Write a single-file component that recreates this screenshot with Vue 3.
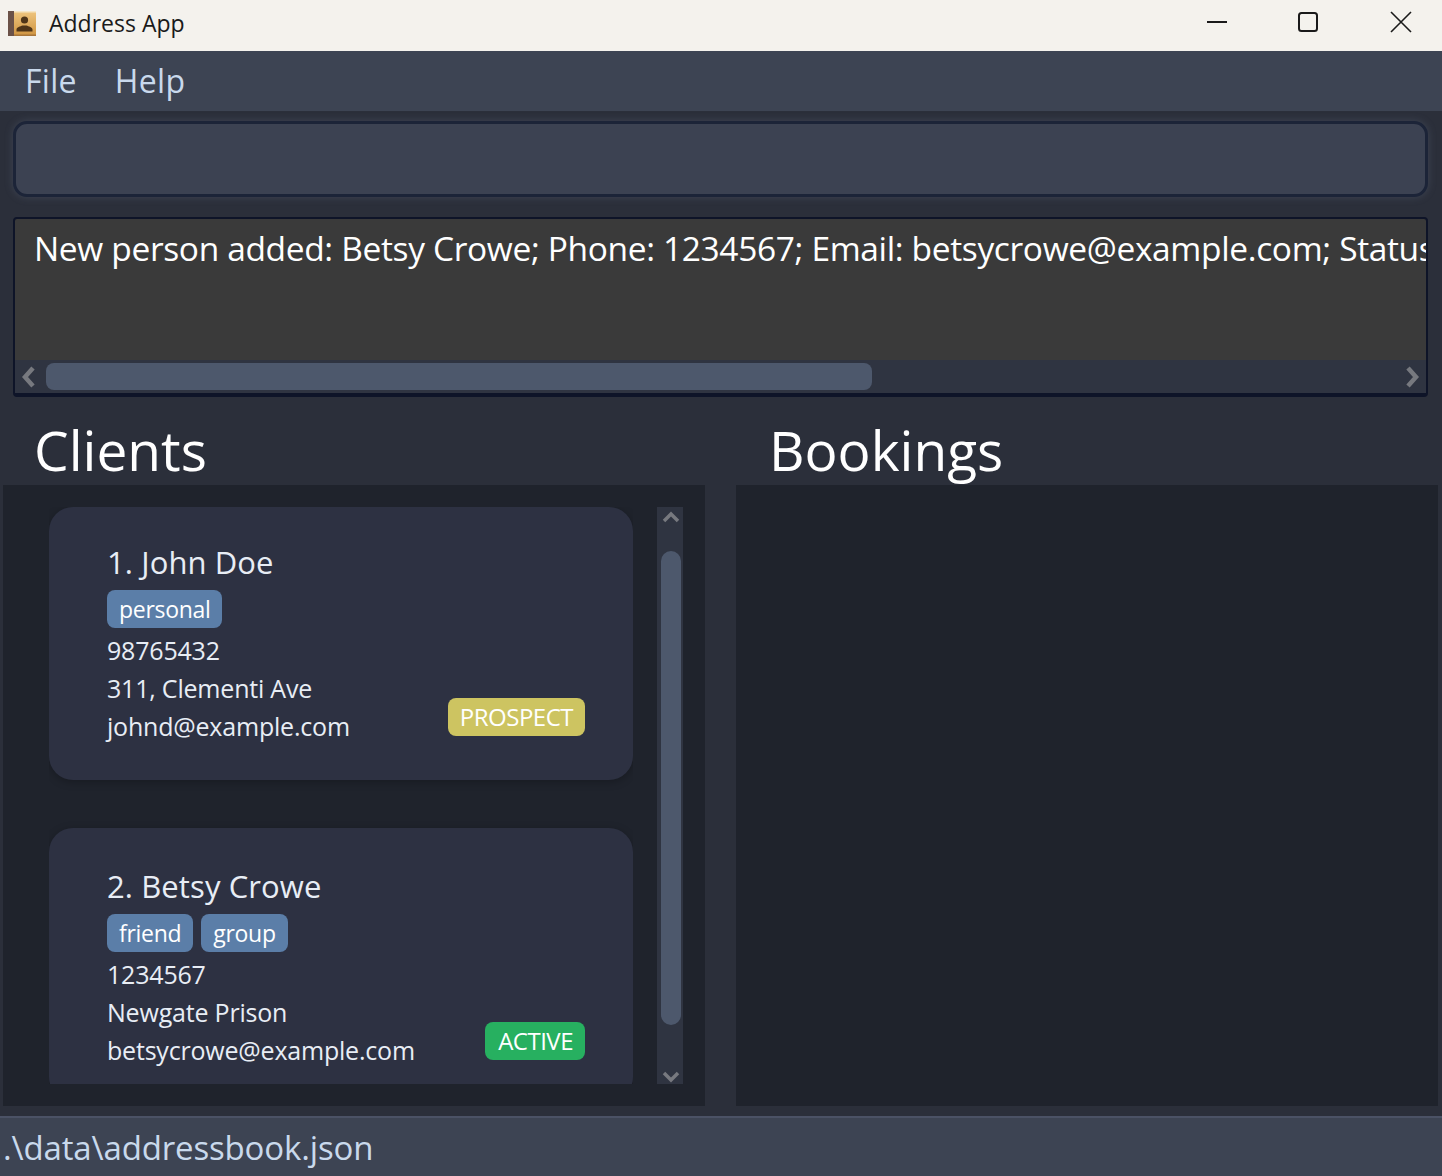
<template>
  <div class="app">
    <div class="titlebar">
      <svg class="appicon" width="30" height="28" viewBox="0 0 30 28">
        <defs>
          <linearGradient id="bookfill" x1="0" y1="0" x2="0" y2="1">
            <stop offset="0" stop-color="#efc67f" />
            <stop offset="1" stop-color="#cf9440" />
          </linearGradient>
        </defs>
        <rect x="1" y="1" width="28" height="25" rx="1" fill="url(#bookfill)" />
        <rect x="1" y="1" width="28" height="1.500" fill="#f6e6c4" />
        <rect x="1" y="1" width="6" height="25" fill="#6b5248" />
        <rect x="7" y="24.500" width="22" height="1.500" fill="#a8763a" />
        <circle cx="17.500" cy="10" r="3.600" fill="#4f3518" />
        <path d="M9.500 21.500v-2c0-2.500 4-3 6-4h4c2 1 6 1.500 6 4v2z" fill="#4f3518" />
      </svg>
      <span class="apptitle">Address App</span>
      <div class="winbtns">
        <svg class="minbtn" width="22" height="22" viewBox="0 0 22 22"><path d="M1 11h20" stroke="#1a1a1a" stroke-width="2" /></svg>
        <svg width="22" height="22" viewBox="0 0 22 22"><rect x="2" y="2" width="18" height="18" rx="2.500" fill="none" stroke="#1a1a1a" stroke-width="2" /></svg>
        <svg width="22" height="22" viewBox="0 0 22 22"><path d="M1 1l20 20M21 1L1 21" stroke="#1a1a1a" stroke-width="1.600" /></svg>
      </div>
    </div>

    <div class="menubar">
      <span v-for="m in menus" :key="m" class="menuitem">{{ m }}</span>
    </div>

    <div class="content">
      <div class="commandbox"></div>

      <div class="resultbox">
        <div class="resulttext">{{ resultMessage }}</div>
        <div class="hscroll">
          <svg class="arrow" width="16" height="26" viewBox="0 0 16 26"><path d="M13 4L5 13l8 9" fill="none" stroke="#77797f" stroke-width="4.500" /></svg>
          <div class="hthumbtrack"><div class="hthumb"></div></div>
          <svg class="arrow" width="16" height="26" viewBox="0 0 16 26"><path d="M3 4l8 9-8 9" fill="none" stroke="#77797f" stroke-width="4.500" /></svg>
        </div>
      </div>

      <div class="columns">
        <div class="column">
          <h2 class="heading">Clients</h2>
          <div class="panel clientpanel">
            <div class="cardlist">
              <div v-for="(c, i) in clients" :key="c.name" class="card">
                <div class="cardname">{{ i + 1 }}. {{ c.name }}</div>
                <div class="tags">
                  <span v-for="t in c.tags" :key="t" class="tag">{{ t }}</span>
                </div>
                <div class="cardline">{{ c.phone }}</div>
                <div class="cardline">{{ c.address }}</div>
                <div class="lastrow">
                  <span class="cardline">{{ c.email }}</span>
                  <span class="status" :class="c.statusClass">{{ c.status }}</span>
                </div>
              </div>
            </div>
            <div class="vscroll">
              <svg width="18" height="12" viewBox="0 0 18 12"><path d="M2 10l7-7 7 7" fill="none" stroke="#77797f" stroke-width="3.500" /></svg>
              <div class="vthumb"></div>
              <svg class="downarrow" width="18" height="12" viewBox="0 0 18 12"><path d="M2 2l7 7 7-7" fill="none" stroke="#77797f" stroke-width="3.500" /></svg>
            </div>
          </div>
        </div>
        <div class="column">
          <h2 class="heading bookings">Bookings</h2>
          <div class="panel"></div>
        </div>
      </div>
    </div>

    <div class="statusbar">.\data\addressbook.json</div>
  </div>
</template>

<script setup>
const menus = ["File", "Help"];

const resultMessage =
  "New person added: Betsy Crowe; Phone: 1234567; Email: betsycrowe@example.com; Status: ACTIVE; Tags: [friend][group]";

const clients = [
  {
    name: "John Doe",
    tags: ["personal"],
    phone: "98765432",
    address: "311, Clementi Ave",
    email: "johnd@example.com",
    status: "PROSPECT",
    statusClass: "prospect",
  },
  {
    name: "Betsy Crowe",
    tags: ["friend", "group"],
    phone: "1234567",
    address: "Newgate Prison",
    email: "betsycrowe@example.com",
    status: "ACTIVE",
    statusClass: "active",
  },
];
</script>

<style>
html,
body {
  margin: 0;
  background: #2b2f3a;
}
</style>

<style scoped>
.app {
  width: 1442px;
  height: 1176px;
  display: flex;
  flex-direction: column;
  overflow: hidden;
  background: #2b2f3a;
  font-family: "Open Sans", "Noto Sans", sans-serif;
  color: #fff;
}
.titlebar {
  height: 51px;
  flex: none;
  display: flex;
  align-items: center;
  background: #f4f2ed;
  color: #1a1a1a;
  padding-left: 7px;
  box-sizing: border-box;
}
.appicon {
  margin-bottom: 3px;
}
.apptitle {
  margin-left: 12px;
  font-size: 23px;
  margin-bottom: 5px;
}
.winbtns {
  margin-left: auto;
  display: flex;
  gap: 71px;
  padding-right: 30px;
  margin-bottom: 7px;
}
.minbtn {
  margin-right: -2px;
}
.menubar {
  height: 60px;
  flex: none;
  display: flex;
  align-items: center;
  gap: 38px;
  padding: 0 0 2px 25px;
  background: #3d4453;
  box-sizing: border-box;
}
.menuitem {
  font-size: 32px;
  color: #c9d9ec;
  letter-spacing: 0.3px;
}
.content {
  flex: 1;
  min-height: 0;
  display: flex;
  flex-direction: column;
  padding: 10px 4px 10px 3px;
  box-sizing: border-box;
}
.commandbox {
  height: 76px;
  flex: none;
  margin: 0 10px;
  background: #3c4252;
  border: 3px solid #1c2438;
  border-radius: 14px;
  box-sizing: border-box;
  box-shadow: 0 0 9px rgba(110, 120, 145, 0.3);
}
.resultbox {
  height: 180px;
  flex: none;
  margin: 20px 10px 0;
  display: flex;
  flex-direction: column;
  background: #3a3a3a;
  border: 2px solid #0e1428;
  border-bottom-width: 4px;
  border-radius: 4px;
  box-sizing: border-box;
  overflow: hidden;
}
.resulttext {
  flex: 1;
  min-height: 0;
  padding: 6px 0 0 19px;
  font-size: 33.500px;
  letter-spacing: -0.35px;
  white-space: nowrap;
  overflow: hidden;
}
.hscroll {
  height: 33px;
  flex: none;
  display: flex;
  align-items: center;
  background: #2f3441;
}
.arrow {
  flex: none;
  margin: 0 5px;
}
.hthumbtrack {
  flex: 1;
  margin: 0 0 0 5px;
}
.hthumb {
  width: 826px;
  height: 27px;
  border-radius: 8px;
  background: #4d586c;
}
.columns {
  flex: 1;
  min-height: 0;
  display: flex;
  gap: 31px;
}
.column {
  width: 702px;
  display: flex;
  flex-direction: column;
}
.heading {
  margin: 0;
  height: 88px;
  flex: none;
  padding: 14px 0 0 31px;
  box-sizing: border-box;
  font-size: 55px;
  font-weight: 400;
  line-height: 78px;
}
.bookings {
  padding-left: 33px;
}
.panel {
  flex: 1;
  min-height: 0;
  background: #1f232c;
}
.clientpanel {
  display: flex;
  padding: 22px 22px 22px 46px;
  box-sizing: border-box;
  gap: 24px;
}
.cardlist {
  flex: 1;
  min-width: 0;
  overflow: hidden;
  display: flex;
  flex-direction: column;
  gap: 48px;
}
.card {
  flex: none;
  height: 273px;
  padding: 35px 48px 0 58px;
  box-sizing: border-box;
  background: #2d3142;
  border-radius: 24px;
  box-shadow: 0 2px 8px rgba(0, 0, 0, 0.25);
}
.card + .card {
  padding-top: 38px;
}
.cardname {
  font-size: 31px;
  line-height: 40px;
  letter-spacing: 0.1px;
  color: #e8edf5;
}
.tags {
  display: flex;
  gap: 8px;
  margin-top: 8px;
}
.tag {
  height: 38px;
  line-height: 38px;
  padding: 0 12px;
  border-radius: 8px;
  background: #5b7ea8;
  font-size: 23px;
  letter-spacing: -0.3px;
}
.cardline {
  height: 38px;
  line-height: 38px;
  font-size: 25px;
  letter-spacing: -0.2px;
  color: #e8edf5;
}
.tags + .cardline {
  margin-top: 3px;
}
.lastrow {
  display: flex;
  justify-content: space-between;
  align-items: center;
}
.status {
  height: 38px;
  line-height: 38px;
  padding: 0 12px;
  border-radius: 8px;
  font-size: 24px;
  letter-spacing: -0.5px;
  margin-top: -18px;
}
.prospect {
  background: #cdc461;
}
.active {
  background: #27b060;
  padding: 0 12px 0 13px;
}
.vscroll {
  width: 26px;
  flex: none;
  display: flex;
  flex-direction: column;
  align-items: center;
  background: #2f3441;
  padding: 4px 0 1px 2px;
  box-sizing: border-box;
}
.vthumb {
  width: 20px;
  height: 474px;
  margin-top: 28px;
  border-radius: 10px;
  background: #4d586c;
}
.downarrow {
  margin-top: auto;
}
.statusbar {
  height: 60px;
  flex: none;
  padding-left: 3px;
  box-sizing: border-box;
  background: #3d4453;
  border-top: 2px solid #4b5265;
  font-size: 33px;
  line-height: 60px;
  letter-spacing: -0.15px;
  color: #c9d9ec;
}
</style>
